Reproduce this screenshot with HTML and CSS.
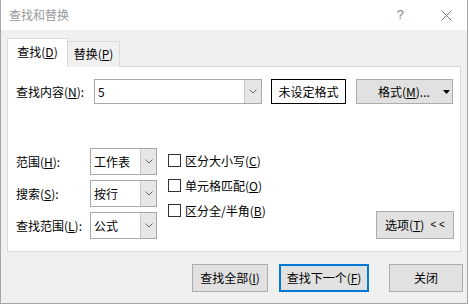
FILE: index.html
```html
<!DOCTYPE html>
<html>
<head>
<meta charset="utf-8">
<link rel="stylesheet" href="styles.css">
</head>
<body>
<div class="dialog">
  <div class="titlebar">
    <span class="title">查找和替换</span>
    <span class="help">?</span>
    <svg class="close" width="11" height="11" viewBox="0 0 11 11"><path d="M0.5 0.5L10.5 10.5M10.5 0.5L0.5 10.5" stroke="#777" stroke-width="1" fill="none"/></svg>
  </div>
  <div class="body">
    <div class="tabs">
      <div class="tab active">查找(<u>D</u>)</div>
      <div class="tab">替换(<u>P</u>)</div>
    </div>
    <div class="panel">
      <div class="row1">
        <span class="lbl-find">查找内容(<u>N</u>):</span>
        <div class="combo combo-wide">
          <span class="combo-text">5</span>
          <span class="drop"><svg width="8" height="5" viewBox="0 0 8 5"><path d="M0.5 0.5L4 4L7.5 0.5" stroke="#666" fill="none"/></svg></span>
        </div>
        <div class="preview">未设定格式</div>
        <div class="btn fmt-btn"><span>格式(<u>M</u>)...</span><svg width="7" height="4" viewBox="0 0 7 4"><path d="M0 0H7L3.5 4Z" fill="#000"/></svg></div>
      </div>
      <div class="opts">
        <div class="fields">
          <div class="field"><span class="lbl">范围(<u>H</u>):</span><div class="combo combo-sm"><span class="combo-text">工作表</span><span class="drop"><svg width="8" height="5" viewBox="0 0 8 5"><path d="M0.5 0.5L4 4L7.5 0.5" stroke="#666" fill="none"/></svg></span></div></div>
          <div class="field"><span class="lbl">搜索(<u>S</u>):</span><div class="combo combo-sm"><span class="combo-text">按行</span><span class="drop"><svg width="8" height="5" viewBox="0 0 8 5"><path d="M0.5 0.5L4 4L7.5 0.5" stroke="#666" fill="none"/></svg></span></div></div>
          <div class="field"><span class="lbl">查找范围(<u>L</u>):</span><div class="combo combo-sm"><span class="combo-text">公式</span><span class="drop"><svg width="8" height="5" viewBox="0 0 8 5"><path d="M0.5 0.5L4 4L7.5 0.5" stroke="#666" fill="none"/></svg></span></div></div>
        </div>
        <div class="checks">
          <div class="check"><span class="box"></span>区分大小写(<u>C</u>)</div>
          <div class="check"><span class="box"></span>单元格匹配(<u>O</u>)</div>
          <div class="check"><span class="box"></span>区分全/半角(<u>B</u>)</div>
        </div>
        <div class="btn opt-btn">选项(<u>T</u>)<span class="lt">&lt; &lt;</span></div>
      </div>
    </div>
    <div class="actions">
      <div class="btn act-all">查找全部(<u>I</u>)</div>
      <div class="btn act-next">查找下一个(<u>F</u>)</div>
      <div class="btn act-close">关闭</div>
    </div>
  </div>
</div>
</body>
</html>
```
FILE: styles.css
```css
* { box-sizing: border-box; }
html, body { margin: 0; padding: 0; background: #ffffff; }
body {
  font-family: "Noto Sans CJK SC", "Microsoft YaHei", sans-serif;
  font-size: 12px;
  color: #000;
  line-height: 16px;
}
u { text-decoration: underline; text-underline-offset: 1px; text-decoration-thickness: 1px; }

.dialog {
  width: 468px;
  height: 304px;
  border-left: 1px solid #a6a6a6;
  border-right: 1px solid #a6a6a6;
  border-bottom: 1px solid #a6a6a6;
  display: flex;
  flex-direction: column;
  background: #f0f0f0;
}
.titlebar {
  height: 30px;
  background: #fff;
  display: flex;
  align-items: center;
  padding-left: 8px;
  flex-shrink: 0;
}
.title { color: #999; font-size: 12px; flex: 1; }
.help { color: #888; font-family: "Liberation Sans", sans-serif; font-size: 13px; margin-right: 37px; }
.close { margin-right: 15px; }

.body { flex: 1; display: flex; flex-direction: column; }
.tabs {
  display: flex;
  align-items: flex-end;
  margin: 9px 0 0 6px;
  height: 28px;
  position: relative;
  z-index: 1;
  margin-bottom: -1px;
}
.tab {
  height: 26px;
  width: 52px;
  border: 1px solid #d9d9d9;
  border-bottom: none;
  border-left: none;
  background: #f0f0f0;
  display: flex;
  align-items: center;
  justify-content: center;
  padding-bottom: 1px;
}
.tab.active {
  height: 29px;
  width: 61px;
  background: #fff;
  border-left: 1px solid #d9d9d9;
  padding-bottom: 3px;
}

.panel {
  margin-left: 6px;
  width: 454px;
  height: 186px;
  border: 1px solid #d9d9d9;
  background: #fff;
  padding: 12px 6px 11px 8px;
  display: flex;
  flex-direction: column;
}
.row1 { display: flex; align-items: center; height: 25px; }
.lbl-find { width: 78px; }
.combo {
  border: 1px solid #a8a8a8;
  background: #fff;
  display: flex;
  align-items: stretch;
}
.combo-text { flex: 1; padding-left: 3px; display: flex; align-items: center; }
.drop {
  background: #e6e6e6;
  border-left: 1px solid #c8c8c8;
  display: flex;
  align-items: center;
  justify-content: center;
}
.combo-wide { width: 168px; height: 25px; }
.combo-wide .drop { width: 17px; }
.preview {
  margin-left: 9px;
  width: 75px;
  height: 25px;
  border: 1px solid #000;
  display: flex;
  align-items: center;
  justify-content: center;
}
.btn {
  background: #e1e1e1;
  border: 1px solid #adadad;
  display: flex;
  align-items: center;
  justify-content: center;
}
.fmt-btn {
  margin-left: 10px;
  width: 97px;
  height: 25px;
  justify-content: flex-start;
  padding-left: 21px;
}
.fmt-btn svg { margin-left: 13px; }

.opts { display: flex; margin-top: 44px; align-items: flex-start; flex: 1; }
.fields { display: flex; flex-direction: column; gap: 5px; }
.field { display: flex; align-items: center; height: 27px; }
.lbl { width: 74px; }
.combo-sm { width: 67px; height: 27px; }
.combo-sm .combo-text { padding-left: 3px; }
.combo-sm .drop { width: 16px; }

.checks { margin-left: 11px; display: flex; flex-direction: column; }
.check { height: 25px; display: flex; align-items: center; }
.box {
  width: 13px;
  height: 13px;
  border: 1px solid #333;
  background: #fff;
  margin-right: 4px;
}
.opt-btn {
  margin-left: auto;
  align-self: flex-end;
  width: 78px;
  height: 28px;
  margin-bottom: 1px;
}
.lt { margin-left: 6px; font-family: "Liberation Sans", sans-serif; font-size: 10px; }

.actions {
  display: flex;
  justify-content: flex-end;
  margin-top: 12px;
  padding-right: 4px;
}
.actions .btn { height: 28px; }
.act-all { width: 76px; }
.act-next { width: 90px; margin-left: 11px; border: 2px solid #0078d7; }
.act-close { width: 74px; margin-left: 20px; }
```
